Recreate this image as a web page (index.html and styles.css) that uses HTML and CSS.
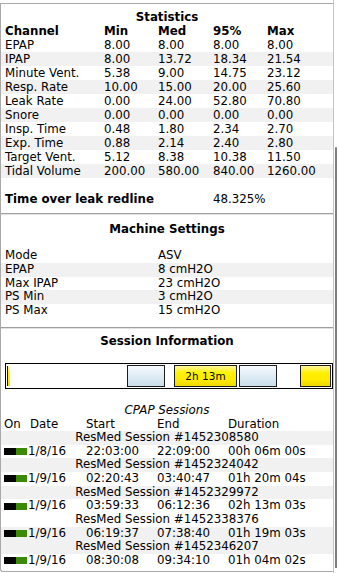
FILE: index.html
```html
<!DOCTYPE html>
<html>
<head>
<meta charset="utf-8">
<link rel="stylesheet" href="styles.css">
</head>
<body>
<div class="window">
  <div class="panel">
    <section class="stats">
      <div class="title">Statistics</div>
      <div class="srow head"><span>Channel</span><span>Min</span><span>Med</span><span>95%</span><span>Max</span></div>
      <div class="srow"><span>EPAP</span><span>8.00</span><span>8.00</span><span>8.00</span><span>8.00</span></div>
      <div class="srow alt"><span>IPAP</span><span>8.00</span><span>13.72</span><span>18.34</span><span>21.54</span></div>
      <div class="srow"><span>Minute Vent.</span><span>5.38</span><span>9.00</span><span>14.75</span><span>23.12</span></div>
      <div class="srow alt"><span>Resp. Rate</span><span>10.00</span><span>15.00</span><span>20.00</span><span>25.60</span></div>
      <div class="srow"><span>Leak Rate</span><span>0.00</span><span>24.00</span><span>52.80</span><span>70.80</span></div>
      <div class="srow alt"><span>Snore</span><span>0.00</span><span>0.00</span><span>0.00</span><span>0.00</span></div>
      <div class="srow"><span>Insp. Time</span><span>0.48</span><span>1.80</span><span>2.34</span><span>2.70</span></div>
      <div class="srow alt"><span>Exp. Time</span><span>0.88</span><span>2.14</span><span>2.40</span><span>2.80</span></div>
      <div class="srow"><span>Target Vent.</span><span>5.12</span><span>8.38</span><span>10.38</span><span>11.50</span></div>
      <div class="srow alt"><span>Tidal Volume</span><span>200.00</span><span>580.00</span><span>840.00</span><span>1260.00</span></div>
      <div class="srow leak"><span class="leak-label">Time over leak redline</span><span class="leak-val">48.325%</span></div>
    </section>

    <section class="machine">
      <div class="title">Machine Settings</div>
      <div class="mrow"><span>Mode</span><span>ASV</span></div>
      <div class="mrow alt"><span>EPAP</span><span>8 cmH2O</span></div>
      <div class="mrow"><span>Max IPAP</span><span>23 cmH2O</span></div>
      <div class="mrow alt"><span>PS Min</span><span>3 cmH2O</span></div>
      <div class="mrow"><span>PS Max</span><span>15 cmH2O</span></div>
    </section>

    <section class="session">
      <div class="title">Session Information</div>
      <div class="timeline">
        <div class="seg yellow thin" style="left:1px;width:2px"></div>
        <div class="seg blue" style="left:121px;width:36px"></div>
        <div class="seg yellow" style="left:168px;width:61px">2h 13m</div>
        <div class="seg blue" style="left:233px;width:36px"></div>
        <div class="seg yellow" style="left:294px;width:29px"></div>
      </div>
      <div class="cpap-title">CPAP Sessions</div>
      <div class="crow head"><span>On</span><span>Date</span><span>Start</span><span>End</span><span>Duration</span></div>

      <div class="name alt">ResMed Session #1452308580</div>
      <div class="crow data"><span class="on"><i class="blk"></i><i class="grn"></i></span><span>1/8/16</span><span>22:03:00</span><span>22:09:00</span><span>00h 06m 00s</span></div>
      <div class="name alt">ResMed Session #1452324042</div>
      <div class="crow data"><span class="on"><i class="blk"></i><i class="grn"></i></span><span>1/9/16</span><span>02:20:43</span><span>03:40:47</span><span>01h 20m 04s</span></div>
      <div class="name alt">ResMed Session #1452329972</div>
      <div class="crow data"><span class="on"><i class="blk"></i><i class="grn"></i></span><span>1/9/16</span><span>03:59:33</span><span>06:12:36</span><span>02h 13m 03s</span></div>
      <div class="name">ResMed Session #1452338376</div>
      <div class="crow data alt"><span class="on"><i class="blk"></i><i class="grn"></i></span><span>1/9/16</span><span>06:19:37</span><span>07:38:40</span><span>01h 19m 03s</span></div>
      <div class="name alt">ResMed Session #1452346207</div>
      <div class="crow data"><span class="on"><i class="blk"></i><i class="grn"></i></span><span>1/9/16</span><span>08:30:08</span><span>09:34:10</span><span>01h 04m 02s</span></div>
    </section>
  </div>
  <div class="scrollbar"><div class="thumb"></div></div>
</div>
</body>
</html>
```
FILE: styles.css
```css
html, body {
  margin: 0;
  padding: 0;
  background: #ffffff;
}
body {
  font-family: "DejaVu Sans", "Verdana", sans-serif;
  font-size: 11.8px;
  color: #000;
  width: 339px;
  height: 573px;
  overflow: hidden;
}
.window {
  display: flex;
  align-items: flex-start;
  height: 573px;
}
.panel {
  width: 332px;
  margin-top: 3px;
  border-top: 1px solid #a9a9a9;
  border-left: 1px solid #a9a9a9;
  border-bottom: 1px solid #a9a9a9;
  border-bottom-left-radius: 3px;
  height: 567px;
  overflow: hidden;
}
.scrollbar {
  width: 5px;
  height: 573px;
  border-left: 1px solid #c4c4c4;
  display: flex;
  flex-direction: column;
}
.thumb {
  margin-top: 147px;
  margin-left: 1px;
  width: 2px;
  height: 421px;
  background: #7d7d7d;
  border-radius: 2px 2px 1px 1px;
}
.title {
  font-weight: bold;
  text-align: center;
  height: 14px;
  line-height: 14px;
}
.alt { background: #f1f1f1; }

/* Statistics */
.stats {
  padding-top: 6px;
  padding-bottom: 7px;
  border-bottom: 1px solid #a0a0a0;
  box-shadow: 0 1px 0 #e2e2e2;
}
.srow {
  display: grid;
  grid-template-columns: 99px 54px 55px 54px 1fr;
  padding-left: 4px;
  height: 14px;
  line-height: 14px;
  white-space: nowrap;
}
.srow.head { font-weight: bold; }
.srow.leak {
  margin-top: 14px;
}
.leak-label {
  grid-column: 1 / 4;
  font-weight: bold;
}
.leak-val { grid-column: 4 / 5; }

/* Machine settings */
.machine {
  margin-top: 1px;
  padding-top: 7px;
  padding-bottom: 9px;
  border-bottom: 1px solid #a0a0a0;
  box-shadow: 0 1px 0 #e2e2e2;
}
.machine .title { margin-bottom: 13px; }
.mrow {
  display: grid;
  grid-template-columns: 153px 1fr;
  padding-left: 4px;
  height: 13.8px;
  line-height: 13.8px;
  white-space: nowrap;
}

/* Session info */
.session {
  margin-top: 1px;
  padding-top: 5px;
}
.timeline {
  position: relative;
  margin: 15px 0 0 4px;
  width: 326px;
  height: 24px;
  border: 1px solid #000;
}
.seg {
  position: absolute;
  top: 1px;
  height: 20px;
  border: 1px solid #1c1c1c;
  font-size: 10.5px;
  line-height: 20px;
  text-align: center;
  white-space: nowrap;
}
.seg.yellow {
  background: linear-gradient(to bottom, #fff7a0 0%, #fff000 35%, #ffea00 70%, #f0d800 100%);
}
.seg.thin {
  border-right: none;
  border-top: none;
  border-bottom: none;
  top: 2px;
  height: 20px;
}
.seg.blue {
  background: linear-gradient(to bottom, #f6fafd 0%, #dfecf5 50%, #c9dde9 100%);
}
.cpap-title {
  margin-top: 14px;
  text-align: center;
  font-style: italic;
  height: 14px;
  line-height: 14px;
}
.crow {
  display: grid;
  padding-left: 3px;
  height: 13.67px;
  line-height: 13.67px;
  white-space: nowrap;
}
.crow.head {
  grid-template-columns: 26px 56px 71px 71px 1fr;
  height: 14px;
  line-height: 14px;
}
.crow.data {
  grid-template-columns: 24px 58px 71px 71px 1fr;
}
.name {
  text-align: center;
  height: 13.67px;
  line-height: 13.67px;
  white-space: nowrap;
}
.on {
  display: flex;
  align-items: center;
}
.on i {
  display: block;
  height: 7px;
}
.on .blk { width: 12px; background: #050505; }
.on .grn { width: 11px; background: #3a8a06; }
```
